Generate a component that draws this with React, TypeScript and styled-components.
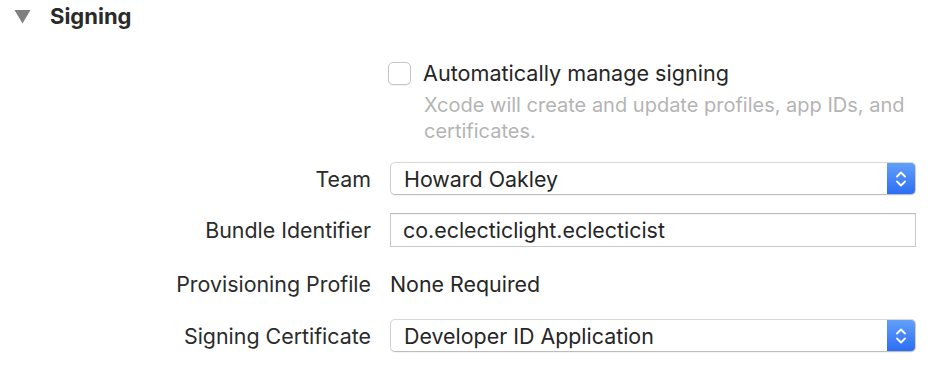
import React from 'react'
import styled, { createGlobalStyle } from 'styled-components'

const GlobalStyle = createGlobalStyle`
  body {
    margin: 0;
    background: #fff;
    font-family: Inter, "Liberation Sans", sans-serif;
    color: #262626;
  }
`

const Page = styled.div`
  width: 940px;
  height: 368px;
  box-sizing: border-box;
  padding: 1px 24px 0 0;
  overflow: hidden;
`

const SectionHeader = styled.div`
  display: flex;
  align-items: center;
  gap: 19px;
  height: 30px;
  padding-left: 14px;
`

const SectionTitle = styled.h2`
  margin: 0;
  font-size: 22px;
  font-weight: 700;
  color: #2a2a2a;
`

const Form = styled.div`
  display: grid;
  grid-template-columns: 371px 1fr;
  column-gap: 19px;
  margin-top: 30px;
`

const CheckBlock = styled.div`
  grid-column: 2;
  display: flex;
  flex-direction: column;
  margin-left: -2px;
  margin-bottom: 18px;
`

const CheckLine = styled.label`
  display: flex;
  align-items: center;
  gap: 12px;
  font-size: 21.6px;
  height: 24px;
`

const CheckBox = styled.span`
  width: 21px;
  height: 21px;
  border: 1px solid #c4c4c4;
  border-radius: 5px;
  background: #fff;
  box-shadow: 0 1px 1px rgba(0, 0, 0, 0.06);
`

const Hint = styled.p`
  margin: 7px 0 0 36px;
  font-size: 20px;
  line-height: 26px;
  color: #b4b4b4;
  max-width: 500px;
`

const Label = styled.div<{ $height: number }>`
  height: ${(p) => p.$height}px;
  display: flex;
  align-items: center;
  justify-content: flex-end;
  font-size: 21.4px;
  color: #2b2b2b;
`

const Control = styled.div<{ $height: number; $gap: number }>`
  height: ${(p) => p.$height}px;
  margin-bottom: ${(p) => p.$gap}px;
  display: flex;
  align-items: center;
  font-size: 21.4px;
`

const Popup = styled.div`
  flex: 1;
  height: 100%;
  display: flex;
  align-items: stretch;
  box-sizing: border-box;
  border: 1px solid #cfcfcf;
  border-top-color: #d8d8d8;
  border-bottom-color: #bdbdbd;
  border-radius: 5px;
  background: #fff;
  box-shadow: 0 1px 1px rgba(0, 0, 0, 0.05);
  overflow: hidden;
`

const PopupText = styled.span`
  flex: 1;
  display: flex;
  align-items: center;
  padding-left: 13px;
  color: #262626;
`

const Stepper = styled.span`
  width: 28px;
  display: flex;
  align-items: center;
  justify-content: center;
  background: linear-gradient(#62a0fa, #2d6df4);
`

const TextField = styled.div`
  flex: 1;
  height: 100%;
  display: flex;
  align-items: center;
  box-sizing: border-box;
  padding-left: 12px;
  border: 1px solid #c9c9c9;
  border-top-color: #bcbcbc;
  box-shadow: inset 0 1px 1px rgba(0, 0, 0, 0.04);
  background: #fff;
`

const PlainValue = styled.span`
  color: #262626;
`

const Chevrons = () => (
  <svg width="12" height="20" viewBox="0 0 12 20" fill="none">
    <path d="M2 7.5 L6 3.5 L10 7.5" stroke="#fff" strokeWidth="1.8" strokeLinecap="round" strokeLinejoin="round" />
    <path d="M2 12.5 L6 16.5 L10 12.5" stroke="#fff" strokeWidth="1.8" strokeLinecap="round" strokeLinejoin="round" />
  </svg>
)

const Disclosure = () => (
  <svg width="17" height="15" viewBox="0 0 17 15">
    <path d="M0.5 1 H16.5 L8.5 14.5 Z" fill="#7f7f7f" />
  </svg>
)

const PopupButton = ({ value }: { value: string }) => (
  <Popup>
    <PopupText>{value}</PopupText>
    <Stepper>
      <Chevrons />
    </Stepper>
  </Popup>
)

export default function App() {
  return (
    <Page>
      <GlobalStyle />
      <SectionHeader>
        <Disclosure />
        <SectionTitle>Signing</SectionTitle>
      </SectionHeader>
      <Form>
        <CheckBlock>
          <CheckLine>
            <CheckBox />
            Automatically manage signing
          </CheckLine>
          <Hint>Xcode will create and update profiles, app IDs, and certificates.</Hint>
        </CheckBlock>

        <Label $height={33}>Team</Label>
        <Control $height={33} $gap={18}>
          <PopupButton value="Howard Oakley" />
        </Control>

        <Label $height={34}>Bundle Identifier</Label>
        <Control $height={34} $gap={20}>
          <TextField>co.eclecticlight.eclecticist</TextField>
        </Control>

        <Label $height={34}>Provisioning Profile</Label>
        <Control $height={34} $gap={18}>
          <PlainValue>None Required</PlainValue>
        </Control>

        <Label $height={33}>Signing Certificate</Label>
        <Control $height={33} $gap={0}>
          <PopupButton value="Developer ID Application" />
        </Control>
      </Form>
    </Page>
  )
}
